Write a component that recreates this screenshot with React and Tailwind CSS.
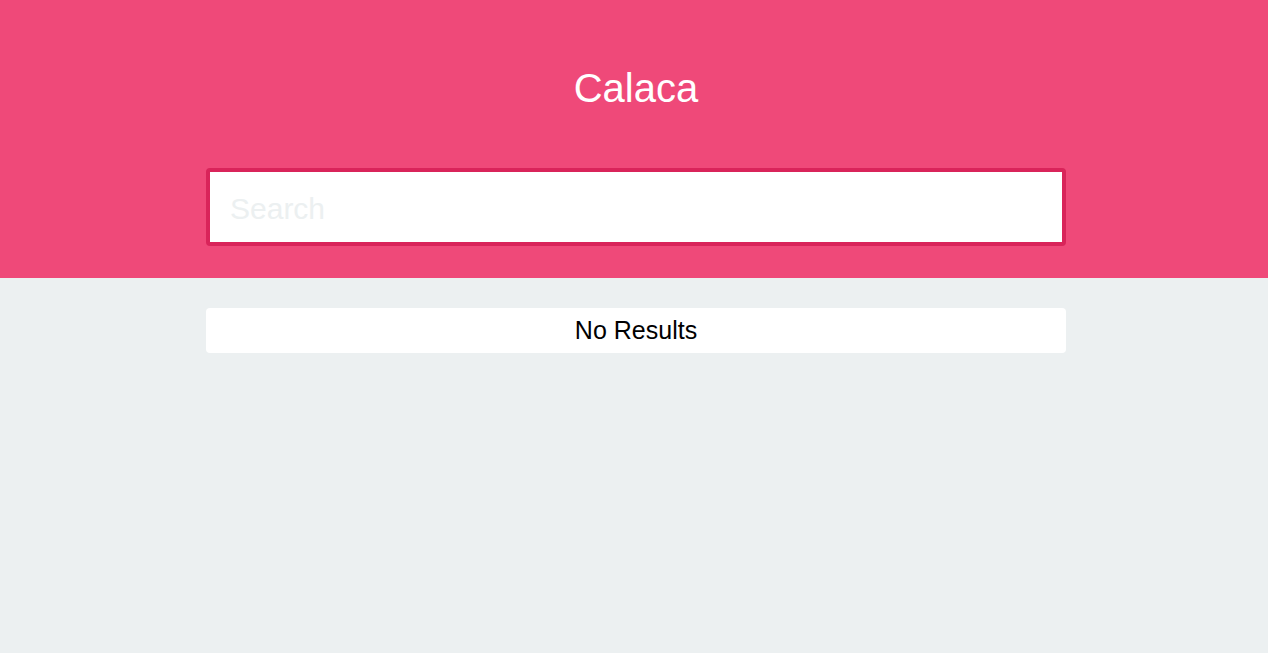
export default function App() {
  return (
    <div className="min-h-[653px] bg-[#ecf0f1] pl-1 font-['Liberation_Sans',Arial,sans-serif]">
      <header className="-ml-1 pl-1 bg-[#ef4979] h-[278px] pt-[62px]">
        <h1 className="text-center text-white text-[40px] leading-[52px]">Calaca</h1>
        <div className="mx-auto w-[860px] mt-[54px]">
          <input
            type="text"
            placeholder="Search"
            className="block w-full h-[78px] rounded-[4px] border-4 border-[#d9245a] bg-white px-5 pt-[3px] text-[30px] text-gray-700 placeholder:text-[#ecf0f1] outline-none"
          />
        </div>
      </header>
      <main className="mx-auto w-[860px] pt-[30px]">
        <div className="flex h-[45px] items-center justify-center rounded-[4px] bg-white text-[25px] text-black">
          No Results
        </div>
      </main>
    </div>
  )
}
